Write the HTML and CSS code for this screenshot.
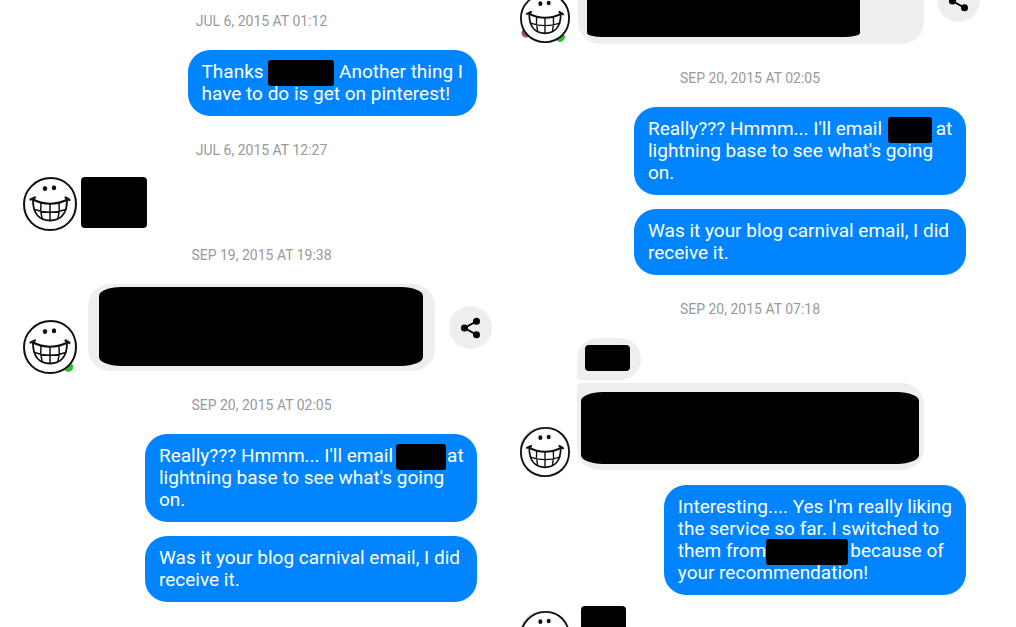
FILE: index.html
```html
<!DOCTYPE html>
<html lang="en">
<head>
<meta charset="utf-8">
<title>Messages</title>
<link rel="stylesheet" href="styles.css">
</head>
<body>
<svg class="symbols" aria-hidden="true">
  <symbol id="smiley" viewBox="0 0 54 54">
    <g fill="none" stroke="#111" stroke-linecap="round" stroke-linejoin="round">
      <path fill="#fff" stroke-width="2" d="M28 1C42 1 53 12 53 27C53 42 42 53 27 53C12 53 1 42 1 27C1 14 12 1 28 1Z"/>
      <path stroke-width="2.200" d="M7.500 22.500L12 20.500M9 22Q27 31.500 45.500 22M42.500 20.500L46.500 23"/>
      <path stroke-width="1.900" d="M10 23C10 36 16 43.500 27 43.500C38 43.500 44 36 44 23"/>
      <path stroke-width="1.500" d="M11.500 32.500Q27 38 43 32.500M18 26Q17 34 19 41M27 27V43M36 26Q37 34 35 41"/>
    </g>
    <ellipse cx="22" cy="11.500" rx="2.200" ry="2.500" fill="#111"/>
    <ellipse cx="31" cy="10.800" rx="2.200" ry="2.500" fill="#111"/>
  </symbol>
  <symbol id="share" viewBox="0 0 22 22">
    <path d="M17 4L4.500 11L17 18" fill="none" stroke="#000" stroke-width="2"/>
    <circle cx="16.500" cy="4.300" r="3.500"/><circle cx="4.500" cy="11" r="3.600"/><circle cx="16.500" cy="17.800" r="3.500"/>
  </symbol>
</svg>
<main class="chats">
  <section class="chat chat-left">
    <time class="stamp">JUL 6, 2015 AT 01:12</time>
    <p class="sent">Thanks <span class="hidden name-a"></span> Another thing I<br>have to do is get on pinterest!</p>
    <time class="stamp">JUL 6, 2015 AT 12:27</time>
    <div class="received short">
      <svg class="avatar" role="img" aria-label="Smiley"><use href="#smiley"/></svg>
      <div class="block"></div>
    </div>
    <time class="stamp">SEP 19, 2015 AT 19:38</time>
    <div class="received">
      <svg class="avatar online" role="img" aria-label="Smiley"><use href="#smiley"/></svg>
      <div class="bubble"><div class="block wide"></div></div>
      <button class="share" aria-label="Share"><svg><use href="#share"/></svg></button>
    </div>
    <time class="stamp">SEP 20, 2015 AT 02:05</time>
    <p class="sent full">Really??? Hmmm... I'll email<span class="hidden name-b"></span>at<br>lightning base to see what's going<br>on.</p>
    <p class="sent full">Was it your blog carnival email, I did<br>receive it.</p>
  </section>
  <section class="chat chat-right">
    <div class="received clipped">
      <svg class="avatar online" role="img" aria-label="Smiley"><use href="#smiley"/></svg>
      <div class="bubble"><div class="block wide"></div></div>
      <button class="share" aria-label="Share"><svg><use href="#share"/></svg></button>
    </div>
    <time class="stamp">SEP 20, 2015 AT 02:05</time>
    <p class="sent full">Really??? Hmmm... I'll email <span class="hidden name-c"></span>at<br>lightning base to see what's going<br>on.</p>
    <p class="sent full">Was it your blog carnival email, I did<br>receive it.</p>
    <time class="stamp">SEP 20, 2015 AT 07:18</time>
    <div class="received group">
      <svg class="avatar shaded" role="img" aria-label="Smiley"><use href="#smiley"/></svg>
      <div class="stack">
        <div class="bubble first"><div class="block"></div></div>
        <div class="bubble last"><div class="block wide"></div></div>
      </div>
    </div>
    <p class="sent">Interesting.... Yes I'm really liking<br>the service so far. I switched to<br>them from<span class="hidden name-d"></span>because of<br>your recommendation!</p>
    <div class="received tail">
      <svg class="avatar shaded" role="img" aria-label="Smiley"><use href="#smiley"/></svg>
      <div class="block"></div>
    </div>
  </section>
</main>
</body>
</html>
```
FILE: styles.css
```css
* { box-sizing: border-box; }
body { margin: 0; background: #fff; font-family: Roboto, sans-serif; }
.symbols { position: absolute; width: 0; height: 0; }
.chats { display: grid; grid-template-columns: 1fr 1fr; height: 100vh; overflow: hidden; }
.chat { display: flex; flex-direction: column; min-width: 0; }
.chat-left { padding: 0 8px 0 23px; margin-top: -13px; --avatar: 54px; --inset: 23px; }
.chat-right { padding: 0 36px 0 12px; --avatar: 50px; --inset: 14px; }

.stamp { padding: 26px 0 21px; text-align: center; font-size: 14px; line-height: 16px; color: #999; }

.sent {
  align-self: flex-end;
  margin: 0 var(--inset) 0 0;
  padding: 11px 14px;
  border-radius: 22px;
  background: #0084ff;
  color: #fff;
  font-size: 19px;
  line-height: 22px;
  white-space: nowrap;
}
.full { width: 332px; }
.sent + .sent { margin-top: 14px; }
.hidden {
  display: inline-block;
  position: relative;
  height: 26px;
  margin-block: -4px;
  border-radius: 3px;
  background: #000;
  vertical-align: middle;
}
.name-a { width: 66px; }
.name-b { width: 50px; margin: -4px 1px -4px 3px; }
.name-c { width: 44px; margin: -4px 4px -4px 1px; }
.name-d { width: 82px; margin-right: 2px; }

.received { display: flex; align-items: flex-end; }
.avatar { flex: none; width: var(--avatar); height: var(--avatar); margin-bottom: -3px; }
.chat-right .avatar { margin-bottom: 1px; }
.online { background: radial-gradient(circle 5px at 84% 87%, #2fc02f 90%, transparent); }
.clipped .online {
  background:
    radial-gradient(circle 5px at 80% 88%, #2fc02f 90%, transparent),
    radial-gradient(circle 5px at 12% 80%, #a05060 80%, transparent);
}
.shaded { background: radial-gradient(circle 25px at 24px 24px, #b8977a 92%, transparent); }
.block { background: #000; border-radius: 4px; }
.wide { height: 100%; border-radius: 22px / 9px; }
.bubble { background: #eee; border-radius: 22px; }
.share {
  display: grid;
  place-items: center;
  align-self: center;
  flex: none;
  width: 43px;
  height: 43px;
  margin-left: auto;
  padding: 0;
  border: 0;
  border-radius: 50%;
  background: #eee;
}
.share svg { width: 22px; height: 22px; }
.chat-left .share { margin-right: 8px; }

.short { align-items: flex-start; margin: -2px 0 -10px; }
.short .avatar { margin-bottom: 0; }
.short .block { width: 66px; height: 51px; margin-left: 4px; }
.chat-left .bubble { width: 347px; height: 87px; margin-left: 11px; padding: 3px 12px 5px 11px; }

.clipped { margin-top: -43px; }
.clipped .bubble { width: 346px; height: 87px; margin-left: 8px; padding: 6px 64px 7px 9px; }
.clipped .wide { border-radius: 16px / 4px; }

.group { margin-bottom: 15px; }
.chat-right .group .avatar { margin-bottom: -7px; }
.stack { display: grid; gap: 3px; margin-left: 7px; }
.first { width: 64px; height: 42px; padding: 7px 11px 9px 8px; border-bottom-left-radius: 4px; }
.first .block { height: 100%; }
.last { width: 347px; height: 87px; padding: 9px 5px 6px 4px; border-top-left-radius: 4px; }

.tail { align-items: flex-start; margin-top: 11px; }
.tail .avatar { margin-top: 5px; }
.tail .block { width: 45px; height: 50px; margin-left: 11px; }
```
